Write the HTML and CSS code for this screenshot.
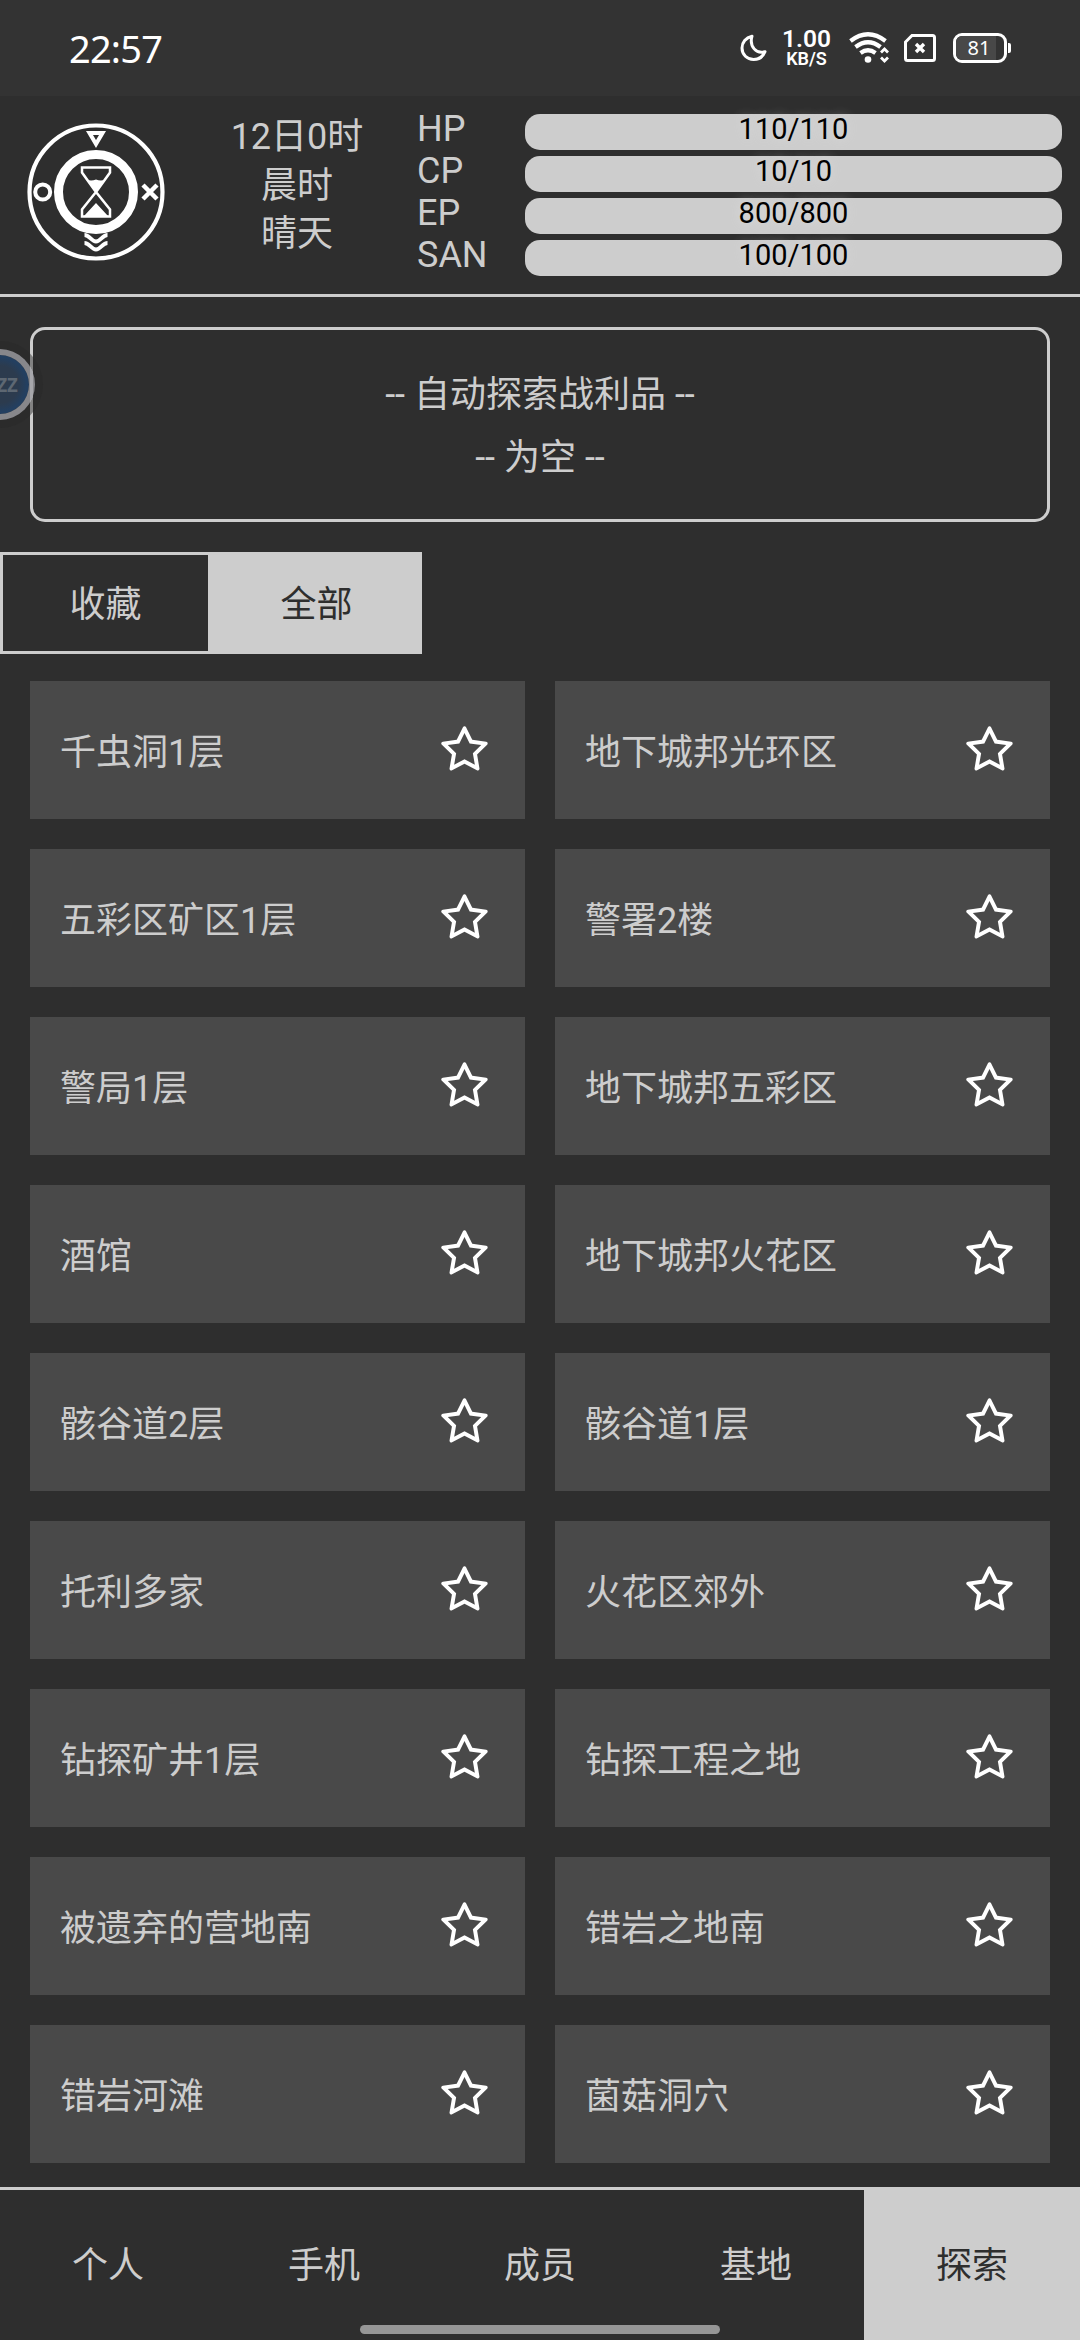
FILE: index.html
```html
<!DOCTYPE html>
<html lang="zh-CN">
<head>
<meta charset="utf-8">
<title>探索</title>
<link rel="stylesheet" href="styles.css">
</head>
<body>
<svg class="defs" aria-hidden="true">
  <symbol id="star" viewBox="64 64 896 896">
    <path d="M908.1 353.1l-253.9-36.9L540.7 86.1c-3.1-6.3-8.2-11.4-14.5-14.5-15.8-7.8-35-1.3-42.9 14.5L369.8 316.2l-253.9 36.9c-7 1-13.4 4.3-18.3 9.3a32.05 32.05 0 00.6 45.3l183.7 179.1-43.4 252.9a31.95 31.95 0 0046.4 33.7L512 754l227.1 119.4c6.2 3.3 13.4 4.4 20.5 3.2 17.4-3 29.1-19.5 26.1-36.9l-43.4-252.9 183.7-179.1c5-4.9 8.3-11.3 9.3-18.3 2.7-17.5-9.5-33.7-27-36.3zM664.8 561.6l36.1 210.3L512 672.7 323.1 772l36.1-210.3-152.8-149L417.6 382 512 190.7 606.4 382l211.2 30.7-152.8 148.9z"/>
  </symbol>
</svg>
<div class="screen">
  <div class="status">
    <span class="clock">22:57</span>
    <div class="status-icons">
      <svg class="moon" viewBox="0 0 28 28" width="28" height="28"><path d="M12 2.2C5.800 3.600 2 8.500 2 14c0 6.600 5.200 11.500 11.600 11.500 5 0 9.400-3 11.400-7.800C16.500 20.500 9 12.500 12 2.200z"/></svg>
      <span class="speed"><b>1.00</b><small>KB/S</small></span>
      <svg class="wifi" viewBox="0 0 42 32" width="42" height="32">
        <g fill="none" stroke="#fff" stroke-width="4.200"><path d="M1.500 9Q19-4.500 36.500 9"/><path d="M6.500 15Q19 5.500 31.500 15"/><path d="M11.500 21Q19 15.500 26.500 21"/></g>
        <circle cx="19" cy="27.500" r="3.300" fill="#fff"/>
        <path d="M32 20.500l3.500-3.500 3.500 3.500M32 25.500l3.500 3.500 3.500-3.500" fill="none" stroke="#fff" stroke-width="2.800"/>
      </svg>
      <svg class="sim" viewBox="0 0 32 28" width="32" height="28"><path d="M8 1.500h20.500q2 0 2 2v21q0 2-2 2h-25q-2 0-2-2V8z" fill="none" stroke="#fff" stroke-width="3"/><path d="M12 10l8 8M20 10l-8 8" stroke="#fff" stroke-width="3.400"/></svg>
      <span class="battery"><span class="cell"><i class="level"></i><em>81</em></span><i class="tip"></i></span>
    </div>
  </div>

  <header class="header">
    <svg class="dial" viewBox="0 0 138 138" width="138" height="138">
      <g fill="none" stroke="#fff">
        <circle cx="69" cy="69" r="66.500" stroke-width="4.200"/>
        <circle cx="69" cy="69" r="37.500" stroke-width="9"/>
        <circle cx="15.700" cy="69" r="7.500" stroke-width="4"/>
        <path d="M62.500 10h13L69 21z" stroke-width="4"/>
        <path d="M116 62l14 14M130 62l-14 14" stroke-width="4.500"/>
        <path d="M57.500 112c5 0 7 6.500 11.500 6.500s6.500-6.500 11.500-6.500M57.500 120c5 0 7 6.500 11.500 6.500s6.500-6.500 11.500-6.500" stroke-width="4"/>
        <path d="M55 44.500h28v5L69 69 55 49.500zM55 93.500h28v-7L69 69 55 86.500z" stroke-width="2.500"/>
      </g>
      <path d="M59.500 56.500q4.500 2 9.500 0 5 2 9.500 0L69 69zM57 93l12-13 12 13z" fill="#fff"/>
    </svg>
    <div class="when"><span>12日0时</span><span>晨时</span><span>晴天</span></div>
    <div class="stats">
      <span class="key">HP</span><span class="bar">110/110</span>
      <span class="key">CP</span><span class="bar">10/10</span>
      <span class="key">EP</span><span class="bar">800/800</span>
      <span class="key">SAN</span><span class="bar">100/100</span>
    </div>
  </header>

  <section class="loot"><p>-- 自动探索战利品 --</p><p>-- 为空 --</p></section>

  <div class="tabs"><span class="tab">收藏</span><span class="tab on">全部</span></div>

  <main class="grid">
    <div class="card"><span>千虫洞1层</span><svg><use href="#star"/></svg></div>
    <div class="card"><span>地下城邦光环区</span><svg><use href="#star"/></svg></div>
    <div class="card"><span>五彩区矿区1层</span><svg><use href="#star"/></svg></div>
    <div class="card"><span>警署2楼</span><svg><use href="#star"/></svg></div>
    <div class="card"><span>警局1层</span><svg><use href="#star"/></svg></div>
    <div class="card"><span>地下城邦五彩区</span><svg><use href="#star"/></svg></div>
    <div class="card"><span>酒馆</span><svg><use href="#star"/></svg></div>
    <div class="card"><span>地下城邦火花区</span><svg><use href="#star"/></svg></div>
    <div class="card"><span>骸谷道2层</span><svg><use href="#star"/></svg></div>
    <div class="card"><span>骸谷道1层</span><svg><use href="#star"/></svg></div>
    <div class="card"><span>托利多家</span><svg><use href="#star"/></svg></div>
    <div class="card"><span>火花区郊外</span><svg><use href="#star"/></svg></div>
    <div class="card"><span>钻探矿井1层</span><svg><use href="#star"/></svg></div>
    <div class="card"><span>钻探工程之地</span><svg><use href="#star"/></svg></div>
    <div class="card"><span>被遗弃的营地南</span><svg><use href="#star"/></svg></div>
    <div class="card"><span>错岩之地南</span><svg><use href="#star"/></svg></div>
    <div class="card"><span>错岩河滩</span><svg><use href="#star"/></svg></div>
    <div class="card"><span>菌菇洞穴</span><svg><use href="#star"/></svg></div>
  </main>

  <nav class="nav"><span>个人</span><span>手机</span><span>成员</span><span>基地</span><span class="on">探索</span></nav>

  <div class="ball"><span>ZZ</span></div>
  <div class="home"></div>
</div>
</body>
</html>
```
FILE: styles.css
```css
* { box-sizing: border-box; }
body { margin: 0; background: #2e2e2e; }
.defs { display: none; }
.screen {
  position: relative;
  display: flex;
  flex-direction: column;
  width: 1080px;
  height: 2340px;
  overflow: hidden;
  background: #2e2e2e;
  color: #cdcdcd;
  font: 36px/1 Roboto, "Noto Sans CJK SC", sans-serif;
}

/* system status bar */
.status {
  display: flex;
  justify-content: space-between;
  align-items: center;
  height: 96px;
  padding: 0 69px 0 69px;
  background: #333;
  color: #fff;
}
.clock { padding-bottom: 1px; font: 38px/1 "Noto Sans", sans-serif; letter-spacing: -0.8px; }
.status-icons { display: flex; align-items: center; }
.moon { fill: none; stroke: #fff; stroke-width: 3; stroke-linejoin: round; margin-right: 14px; }
.speed { display: flex; flex-direction: column; align-items: center; width: 49px; margin-right: 18px; }
.speed b { font: 600 24.5px/20px Roboto, sans-serif; }
.speed small { font: 600 18px/19px Roboto, sans-serif; }
.wifi { margin-right: 13px; }
.sim { margin-right: 17px; }
.battery { display: flex; align-items: center; gap: 1px; }
.cell { position: relative; display: flex; align-items: center; justify-content: center; width: 54px; height: 30px; border: 3px solid #fff; border-radius: 9px; overflow: hidden; }
.level { position: absolute; inset: 0 8px 0 0; background: #484848; }
.cell em { position: relative; padding-right: 2px; font: 20px/1 "Noto Sans", sans-serif; }
.tip { width: 3px; height: 10px; border-radius: 0 2px 2px 0; background: #fff; }

/* time, weather and vitals */
.header { display: flex; height: 201px; border-bottom: 3px solid #cdcdcd; }
.dial { margin: 27px 0 0 27px; flex: none; }
.when { display: flex; flex-direction: column; align-items: center; width: 264px; padding-top: 17px; }
.when span { line-height: 48.500px; }
.stats { display: grid; grid-template-columns: 108px 537px; grid-auto-rows: 42px; margin: 12px 0 0 -12px; }
.key { line-height: 42px; }
.bar {
  height: 36px;
  margin-top: 6px;
  border-radius: 15px;
  background: #cdcdcd;
  color: #000;
  font-size: 29px;
  line-height: 31px;
  text-align: center;
  text-shadow: 0 0 12px #ddd;
}

.loot {
  display: flex;
  flex-direction: column;
  justify-content: center;
  height: 195px;
  margin: 30px 30px 0;
  padding-top: 5px;
  border: 3px solid #cdcdcd;
  border-radius: 15px;
  text-align: center;
}
.loot p { margin: 0; line-height: 63px; }

.tabs { display: flex; height: 102px; margin-top: 30px; }
.tab { width: 211px; border: 3px solid #cdcdcd; line-height: 100px; text-align: center; }
.on { background: #cdcdcd; color: #2e2e2e; }

.grid { display: grid; grid-template-columns: 495px 495px; grid-auto-rows: 138px; gap: 30px; margin: 27px 30px 0; }
.card { display: flex; align-items: center; justify-content: space-between; padding: 0 36px 0 30px; background: #494949; }
.card span { padding-top: 5px; }
.card svg { width: 49px; height: 49px; fill: #fff; }

.nav { display: flex; height: 153px; margin-top: auto; border-top: 3px solid #cdcdcd; }
.nav span { flex: 1; line-height: 152px; text-align: center; }

/* floating assistant docked at the screen edge */
.ball {
  position: absolute;
  left: -36px;
  top: 349px;
  width: 71px;
  height: 71px;
  border: 6px solid rgba(158, 158, 162, .8);
  border-radius: 50%;
  background: radial-gradient(circle, #2c3b4e 45%, #233f60 65%) padding-box;
  box-shadow: 0 0 0 8px rgba(40, 40, 40, .45);
  color: #5d6772;
}
.ball span { position: absolute; right: 12px; top: 21px; font: bold 19px/19px "DejaVu Sans Mono", monospace; letter-spacing: -1px; }
.home { position: absolute; left: 360px; top: 2325px; width: 360px; height: 9px; border-radius: 5px; background: #969696; }
```
